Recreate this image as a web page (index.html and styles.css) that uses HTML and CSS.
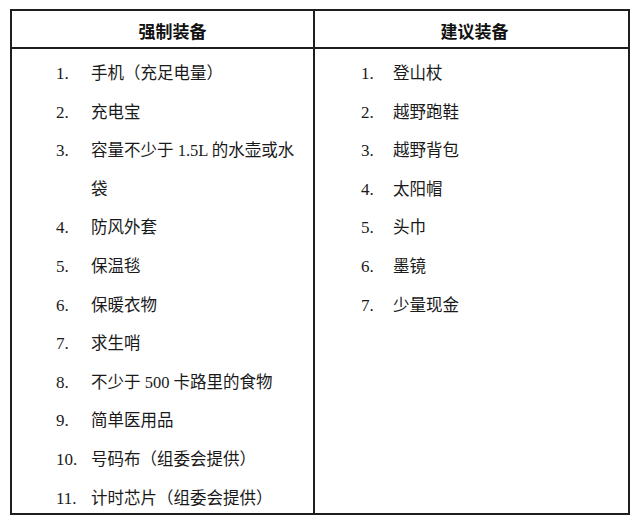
FILE: index.html
```html
<!DOCTYPE html>
<html lang="zh-CN">
<head>
<meta charset="utf-8">
<title>装备清单</title>
<link rel="stylesheet" href="styles.css">
</head>
<body>
<div class="sheet">
  <div class="col col-left">
    <div class="head">强制装备</div>
    <div class="body">
      <div class="item"><span class="num">1.</span><span class="txt">手机（充足电量）</span></div>
      <div class="item"><span class="num">2.</span><span class="txt">充电宝</span></div>
      <div class="item"><span class="num">3.</span><span class="txt">容量不少于 1.5L 的水壶或水袋</span></div>
      <div class="item"><span class="num">4.</span><span class="txt">防风外套</span></div>
      <div class="item"><span class="num">5.</span><span class="txt">保温毯</span></div>
      <div class="item"><span class="num">6.</span><span class="txt">保暖衣物</span></div>
      <div class="item"><span class="num">7.</span><span class="txt">求生哨</span></div>
      <div class="item"><span class="num">8.</span><span class="txt">不少于 500 卡路里的食物</span></div>
      <div class="item"><span class="num">9.</span><span class="txt">简单医用品</span></div>
      <div class="item"><span class="num">10.</span><span class="txt">号码布（组委会提供）</span></div>
      <div class="item"><span class="num">11.</span><span class="txt">计时芯片（组委会提供）</span></div>
    </div>
  </div>
  <div class="col col-right">
    <div class="head">建议装备</div>
    <div class="body">
      <div class="item"><span class="num">1.</span><span class="txt">登山杖</span></div>
      <div class="item"><span class="num">2.</span><span class="txt">越野跑鞋</span></div>
      <div class="item"><span class="num">3.</span><span class="txt">越野背包</span></div>
      <div class="item"><span class="num">4.</span><span class="txt">太阳帽</span></div>
      <div class="item"><span class="num">5.</span><span class="txt">头巾</span></div>
      <div class="item"><span class="num">6.</span><span class="txt">墨镜</span></div>
      <div class="item"><span class="num">7.</span><span class="txt">少量现金</span></div>
    </div>
  </div>
</div>
</body>
</html>
```

FILE: styles.css
```css
html, body {
  margin: 0;
  padding: 0;
  background: #ffffff;
}
body {
  font-family: "Liberation Serif", "Noto Sans CJK SC", serif;
  color: #1a1a1a;
}
.sheet {
  margin: 9px 0 0 10px;
  width: 620px;
  height: 506px;
  box-sizing: border-box;
  border: 2px solid #1e1e1e;
  display: grid;
  grid-template-columns: 303px 1fr;
}
.col {
  display: flex;
  flex-direction: column;
}
.col-left {
  border-right: 2px solid #1e1e1e;
}
.head {
  height: 38px;
  box-sizing: border-box;
  border-bottom: 2px solid #1e1e1e;
  display: flex;
  align-items: center;
  justify-content: center;
  font-family: "Noto Sans CJK SC", sans-serif;
  font-weight: 700;
  font-size: 17px;
  color: #111;
  padding-top: 2px;
}
.col-left .head { padding-left: 20px; }
.col-right .head { padding-left: 6px; }
.body {
  padding-top: 6px;
}
.item {
  display: flex;
  align-items: baseline;
  font-size: 16.5px;
}
.num {
  font-family: "Liberation Serif", serif;
  font-size: 17px;
  line-height: 20px;
  flex: none;
}
.txt {
  font-family: "Liberation Serif", "Noto Sans CJK SC", serif;
  font-weight: 400;
  line-height: 38.6px;
  flex: 1;
  min-width: 0;
}
.col-left .num { width: 35px; margin-left: 44px; }
.col-left .txt { padding-right: 12px; }
.col-right .num { width: 32px; margin-left: 46px; }
```
